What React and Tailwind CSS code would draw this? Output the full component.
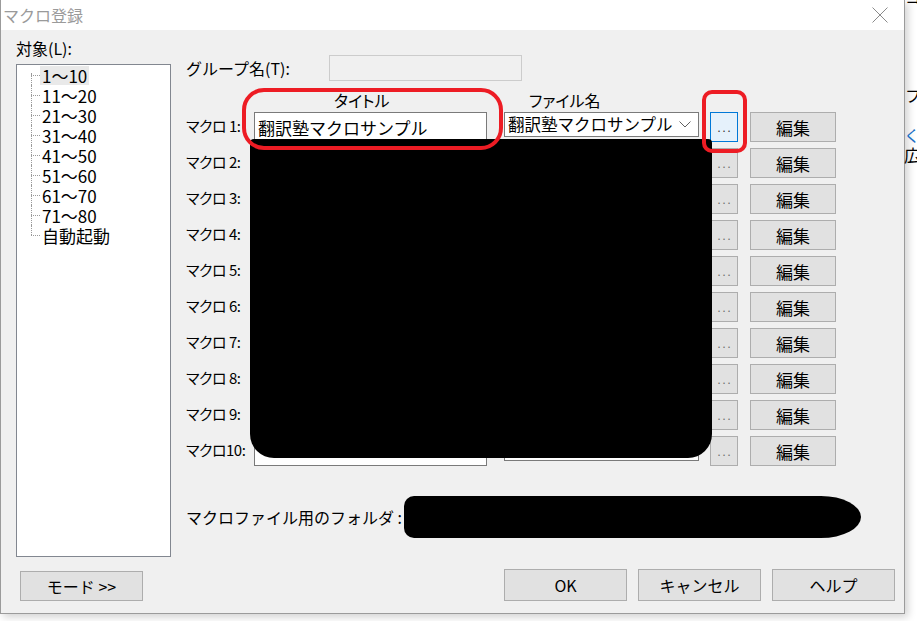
import React from "react";

const treeItems = ["1〜10", "11〜20", "21〜30", "31〜40", "41〜50", "51〜60", "61〜70", "71〜80", "自動起動"];

const macroRows = [
  "マクロ 1:",
  "マクロ 2:",
  "マクロ 3:",
  "マクロ 4:",
  "マクロ 5:",
  "マクロ 6:",
  "マクロ 7:",
  "マクロ 8:",
  "マクロ 9:",
  "マクロ10:",
];

const WinButton = ({ children, className = "" }) => (
  <div
    className={`flex items-center justify-center bg-[#e1e1e1] border border-[#adadad] text-[16px] leading-none text-black ${className}`}
  >
    {children}
  </div>
);

const TreeItem = ({ label, index, last }) => (
  <div className="relative h-[20px] flex items-center pl-[23px]">
    {/* dotted connectors */}
    <span className="absolute left-[14px] top-[10px] w-[9px] border-t border-dotted border-[#9a9a9a]" />
    {index === 0 ? (
      <span className="absolute left-[14px] top-[8px] bottom-0 border-l border-dotted border-[#9a9a9a]" />
    ) : last ? (
      <span className="absolute left-[14px] top-0 h-[10px] border-l border-dotted border-[#9a9a9a]" />
    ) : (
      <span className="absolute left-[14px] top-0 bottom-0 border-l border-dotted border-[#9a9a9a]" />
    )}
    <span
      className={`px-[2px] h-[19px] flex items-center text-[17px] leading-[19px] ${
        index === 0 ? "bg-[#e9e9e9]" : ""
      }`}
    >
      {label}
    </span>
  </div>
);

const MacroRow = ({ label, first }) => (
  <div className="flex h-[30px] items-start">
    <div className="w-[68px] h-[27px] flex items-center text-[15px] leading-none tracking-[-0.5px] [font-feature-settings:'palt']">
      {label}
    </div>
    <div className="w-[233px] h-[30px] border border-[#7a7a7a] bg-white flex items-center pl-[3px] text-[17px] leading-none">
      {first ? "翻訳塾マクロサンプル" : ""}
    </div>
    <div className="ml-[17px] w-[195px] h-[25px] border border-[#7a7a7a] bg-white flex items-center pl-[3px] text-[16.5px] leading-none">
      <span>{first ? "翻訳塾マクロサンプル" : ""}</span>
      <svg className="ml-auto mr-[7px]" width="12" height="7" viewBox="0 0 12 7">
        <path d="M0.5 0.5 L6 6 L11.5 0.5" stroke="#606060" strokeWidth="1" fill="none" />
      </svg>
    </div>
    <div
      className={`ml-[11px] w-[28px] h-[30px] flex items-end justify-center pb-[8px] border text-[11px] leading-none tracking-[2px] pl-[2px] ${
        first ? "bg-[#e5f1fb] border-[#0078d7] text-[#333333]" : "bg-[#e1e1e1] border-[#adadad] text-[#6d6d6d]"
      }`}
    >
      ...
    </div>
    <WinButton className="ml-[12px] w-[86px] h-[30px] text-[17px]">編集</WinButton>
  </div>
);

export default function App() {
  return (
    <div className="relative w-[917px] h-[621px] bg-white overflow-hidden font-['Noto_Sans_CJK_JP',sans-serif] text-black">
      {/* background window fragments */}
      <div className="absolute left-[905px] top-[-12px] text-[16px] leading-none">ヨ</div>
      <div className="absolute left-[905px] top-[87px] text-[16px] leading-none">フ</div>
      <div className="absolute left-[904px] top-[127px] text-[16px] leading-none text-[#1a6fc4]">く</div>
      <div className="absolute left-[904px] top-[146px] text-[17px] leading-none">広</div>

      {/* dialog */}
      <div className="w-[905px] h-[614px] flex flex-col border-x border-b border-[#9b9b9b] shadow-[3px_3px_8px_rgba(0,0,0,0.18)] bg-white">
        <div className="h-[30px] flex items-center bg-white">
          <span className="ml-[2px] text-[16px] leading-none text-[#9a9a9a]">マクロ登録</span>
          <svg className="ml-auto mr-[16px]" width="16" height="16" viewBox="0 0 16 16">
            <path d="M0.5 0.5 L15.5 15.5 M15.5 0.5 L0.5 15.5" stroke="#8a8a8a" strokeWidth="1" />
          </svg>
        </div>

        <div className="flex-1 bg-[#f0f0f0] flex pl-[15px]">
          {/* left column */}
          <div className="w-[155px] flex flex-col">
            <div className="mt-[8px] h-[20px] flex items-center text-[16px] leading-none">対象(L):</div>
            <div className="mt-[6px] h-[493px] bg-white border border-[#828790] flex flex-col">
              {treeItems.map((t, i) => (
                <TreeItem key={t} label={t} index={i} last={i === treeItems.length - 1} />
              ))}
            </div>
            <WinButton className="mt-[14px] ml-[4px] w-[123px] h-[30px]">モード &gt;&gt;</WinButton>
          </div>

          {/* right column */}
          <div className="ml-[15px] flex-1 flex flex-col pt-[25px] pr-[9px]">
            <div className="flex h-[26px] items-center">
              <div className="w-[143px] text-[16px] leading-none">グループ名(T):</div>
              <div className="w-[193px] h-[26px] border border-[#cccccc] bg-[#f0f0f0]" />
            </div>

            <div className="flex h-[31px] items-center pt-[7px] text-[16px] leading-none [font-feature-settings:'palt']">
              <div className="w-[343px] pl-[148px]">タイトル</div>
              <div>ファイル名</div>
            </div>

            <div className="flex flex-col gap-[6px]">
              {macroRows.map((r, i) => (
                <MacroRow key={r} label={r} first={i === 0} />
              ))}
            </div>

            <div className="mt-[39px] h-[24px] flex items-center text-[16px] leading-none">
              マクロファイル用のフォルダ :
            </div>

            <div className="mt-[40px] flex justify-end gap-[11px]">
              <WinButton className="w-[123px] h-[32px]">OK</WinButton>
              <WinButton className="w-[123px] h-[32px]">キャンセル</WinButton>
              <WinButton className="w-[123px] h-[32px]">ヘルプ</WinButton>
            </div>
          </div>
        </div>
      </div>

      {/* redactions */}
      <div className="absolute left-[250px] top-[139px] w-[462px] h-[319px] bg-black rounded-t-[4px] rounded-b-[24px]" />
      <div className="absolute left-[404px] top-[496px] w-[457px] h-[42px] bg-black rounded-l-[10px] rounded-r-[40px_21px]" />

      {/* red annotations */}
      <div className="absolute left-[242px] top-[88px] w-[261px] h-[62px] border-[4px] border-[#ed1c24] rounded-[22px]" />
      <div className="absolute left-[702px] top-[90px] w-[45px] h-[63px] border-[4px] border-[#ed1c24] rounded-[10px]" />
    </div>
  );
}
